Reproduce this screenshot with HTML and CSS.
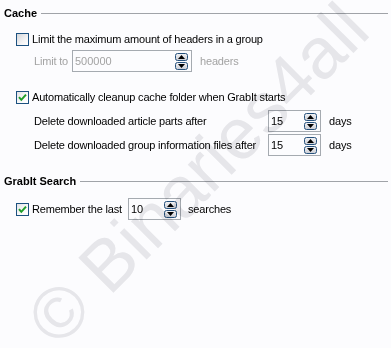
FILE: index.html
```html
<!DOCTYPE html>
<html>
<head>
<meta charset="utf-8">
<link rel="stylesheet" href="styles.css">
</head>
<body>
<div class="page">
  <div class="section-head head-cache"><span class="section-title">Cache</span><span class="rule"></span></div>

  <div class="row row-limit-cb">
    <span class="checkbox"></span>
    <span class="label">Limit the maximum amount of headers in a group</span>
  </div>

  <div class="row row-limit indent">
    <span class="label disabled lbl-limit">Limit to</span>
    <span class="spin spin-limit"><span class="val disabled">500000</span>
      <svg class="spinbtn" width="13" height="17" viewBox="0 0 13 17"><defs><linearGradient id="g1" x1="0" y1="0" x2="0" y2="1"><stop offset="0" stop-color="#f4f4f6"/><stop offset="1" stop-color="#c9ccd4"/></linearGradient></defs><rect x="0.5" y="0.5" width="12" height="7" rx="2" fill="url(#g1)" stroke="#27527d"/><polygon points="6.5,2 3,6 10,6" fill="#000"/><rect x="0.5" y="9.5" width="12" height="7" rx="2" fill="url(#g1)" stroke="#27527d"/><polygon points="3,11 10,11 6.5,15" fill="#000"/></svg>
    </span>
    <span class="label disabled after">headers</span>
  </div>

  <div class="row row-clean-cb">
    <span class="checkbox checked"><svg width="11" height="11" viewBox="0 0 11 11"><path d="M2 5.2 L4.3 7.8 L9 2.6" fill="none" stroke="#1f9e2a" stroke-width="2"/></svg></span>
    <span class="label">Automatically cleanup cache folder when GrabIt starts</span>
  </div>

  <div class="row row-del1 indent">
    <span class="label lbl-del">Delete downloaded article parts after</span>
    <span class="spin spin-small"><span class="val">15</span>
      <svg class="spinbtn" width="13" height="17" viewBox="0 0 13 17"><rect x="0.5" y="0.5" width="12" height="7" rx="2" fill="url(#g1)" stroke="#27527d"/><polygon points="6.5,2 3,6 10,6" fill="#000"/><rect x="0.5" y="9.5" width="12" height="7" rx="2" fill="url(#g1)" stroke="#27527d"/><polygon points="3,11 10,11 6.5,15" fill="#000"/></svg>
    </span>
    <span class="label after">days</span>
  </div>

  <div class="row row-del2 indent">
    <span class="label lbl-del">Delete downloaded group information files after</span>
    <span class="spin spin-small"><span class="val">15</span>
      <svg class="spinbtn" width="13" height="17" viewBox="0 0 13 17"><rect x="0.5" y="0.5" width="12" height="7" rx="2" fill="url(#g1)" stroke="#27527d"/><polygon points="6.5,2 3,6 10,6" fill="#000"/><rect x="0.5" y="9.5" width="12" height="7" rx="2" fill="url(#g1)" stroke="#27527d"/><polygon points="3,11 10,11 6.5,15" fill="#000"/></svg>
    </span>
    <span class="label after">days</span>
  </div>

  <div class="section-head head-search"><span class="section-title">GrabIt Search</span><span class="rule"></span></div>

  <div class="row row-remember">
    <span class="checkbox checked"><svg width="11" height="11" viewBox="0 0 11 11"><path d="M2 5.2 L4.3 7.8 L9 2.6" fill="none" stroke="#1f9e2a" stroke-width="2"/></svg></span>
    <span class="label lbl-remember">Remember the last</span>
    <span class="spin spin-small"><span class="val">10</span>
      <svg class="spinbtn" width="13" height="17" viewBox="0 0 13 17"><rect x="0.5" y="0.5" width="12" height="7" rx="2" fill="url(#g1)" stroke="#27527d"/><polygon points="6.5,2 3,6 10,6" fill="#000"/><rect x="0.5" y="9.5" width="12" height="7" rx="2" fill="url(#g1)" stroke="#27527d"/><polygon points="3,11 10,11 6.5,15" fill="#000"/></svg>
    </span>
    <span class="label after-s">searches</span>
  </div>
</div>
<div class="watermark">© Binaries4all</div>
</body>
</html>
```

FILE: styles.css
```css
html, body {
  margin: 0;
  padding: 0;
  background: #fcfcfe;
  height: 100%;
  overflow: hidden;
}
body {
  font-family: "Liberation Sans", Arial, sans-serif;
  font-size: 11px;
  letter-spacing: -0.18px;
  color: #000;
  position: relative;
}
.page {
  display: flex;
  flex-direction: column;
  padding: 0 3px 0 4px;
}
.section-head {
  display: flex;
  align-items: center;
  height: 14px;
}
.head-cache { margin-top: 6px; }
.head-search { margin-top: 18px; }
.section-title {
  font-weight: bold;
  letter-spacing: 0;
  margin-right: 4px;
}
.rule {
  flex: 1;
  height: 0;
  border-top: 1px solid #a0a3a8;
}
.row {
  display: flex;
  align-items: center;
  padding-left: 12px;
}
.row.indent { padding-left: 30px; }
.row-limit-cb { height: 14px; margin-top: 12px; }
.row-limit { height: 22px; margin-top: 4px; }
.row-clean-cb { height: 14px; margin-top: 18px; }
.row-del1 { height: 22px; margin-top: 6px; }
.row-del2 { height: 22px; margin-top: 2px; }
.row-remember { height: 22px; margin-top: 10px; }

.checkbox {
  width: 11px;
  height: 11px;
  border: 1px solid #1c5180;
  background: linear-gradient(135deg, #d4d6da 0%, #f3f3f4 60%, #fff 100%);
  margin-right: 3px;
  display: flex;
  align-items: center;
  justify-content: center;
  flex: none;
}
.checkbox.checked { background: linear-gradient(135deg, #e2e3e6 0%, #fafafa 60%, #fff 100%); }
.label { white-space: nowrap; }
.disabled { color: #a3a3a3; }
.lbl-limit { width: 38px; }
.lbl-del { width: 234px; }
.lbl-remember { width: 96px; }
.spin {
  box-sizing: border-box;
  height: 22px;
  border: 1px solid #a5aab0;
  display: flex;
  align-items: center;
  justify-content: space-between;
  padding: 0 3px 0 2px;
  flex: none;
}
.spin-limit { width: 120px; }
.spin-small { width: 53px; }
.val { letter-spacing: 0; }
.spinbtn { display: block; }
.after { margin-left: 8px; }
.after-s { margin-left: 7px; }

.watermark {
  position: absolute;
  left: 40px;
  top: 295px;
  font-family: "Liberation Sans", Arial, sans-serif;
  font-size: 72px;
  line-height: 72px;
  letter-spacing: 0;
  white-space: nowrap;
  color: #e9e9eb;
  transform: rotate(-45deg);
  transform-origin: 0 50%;
  mix-blend-mode: multiply;
  pointer-events: none;
}
```
